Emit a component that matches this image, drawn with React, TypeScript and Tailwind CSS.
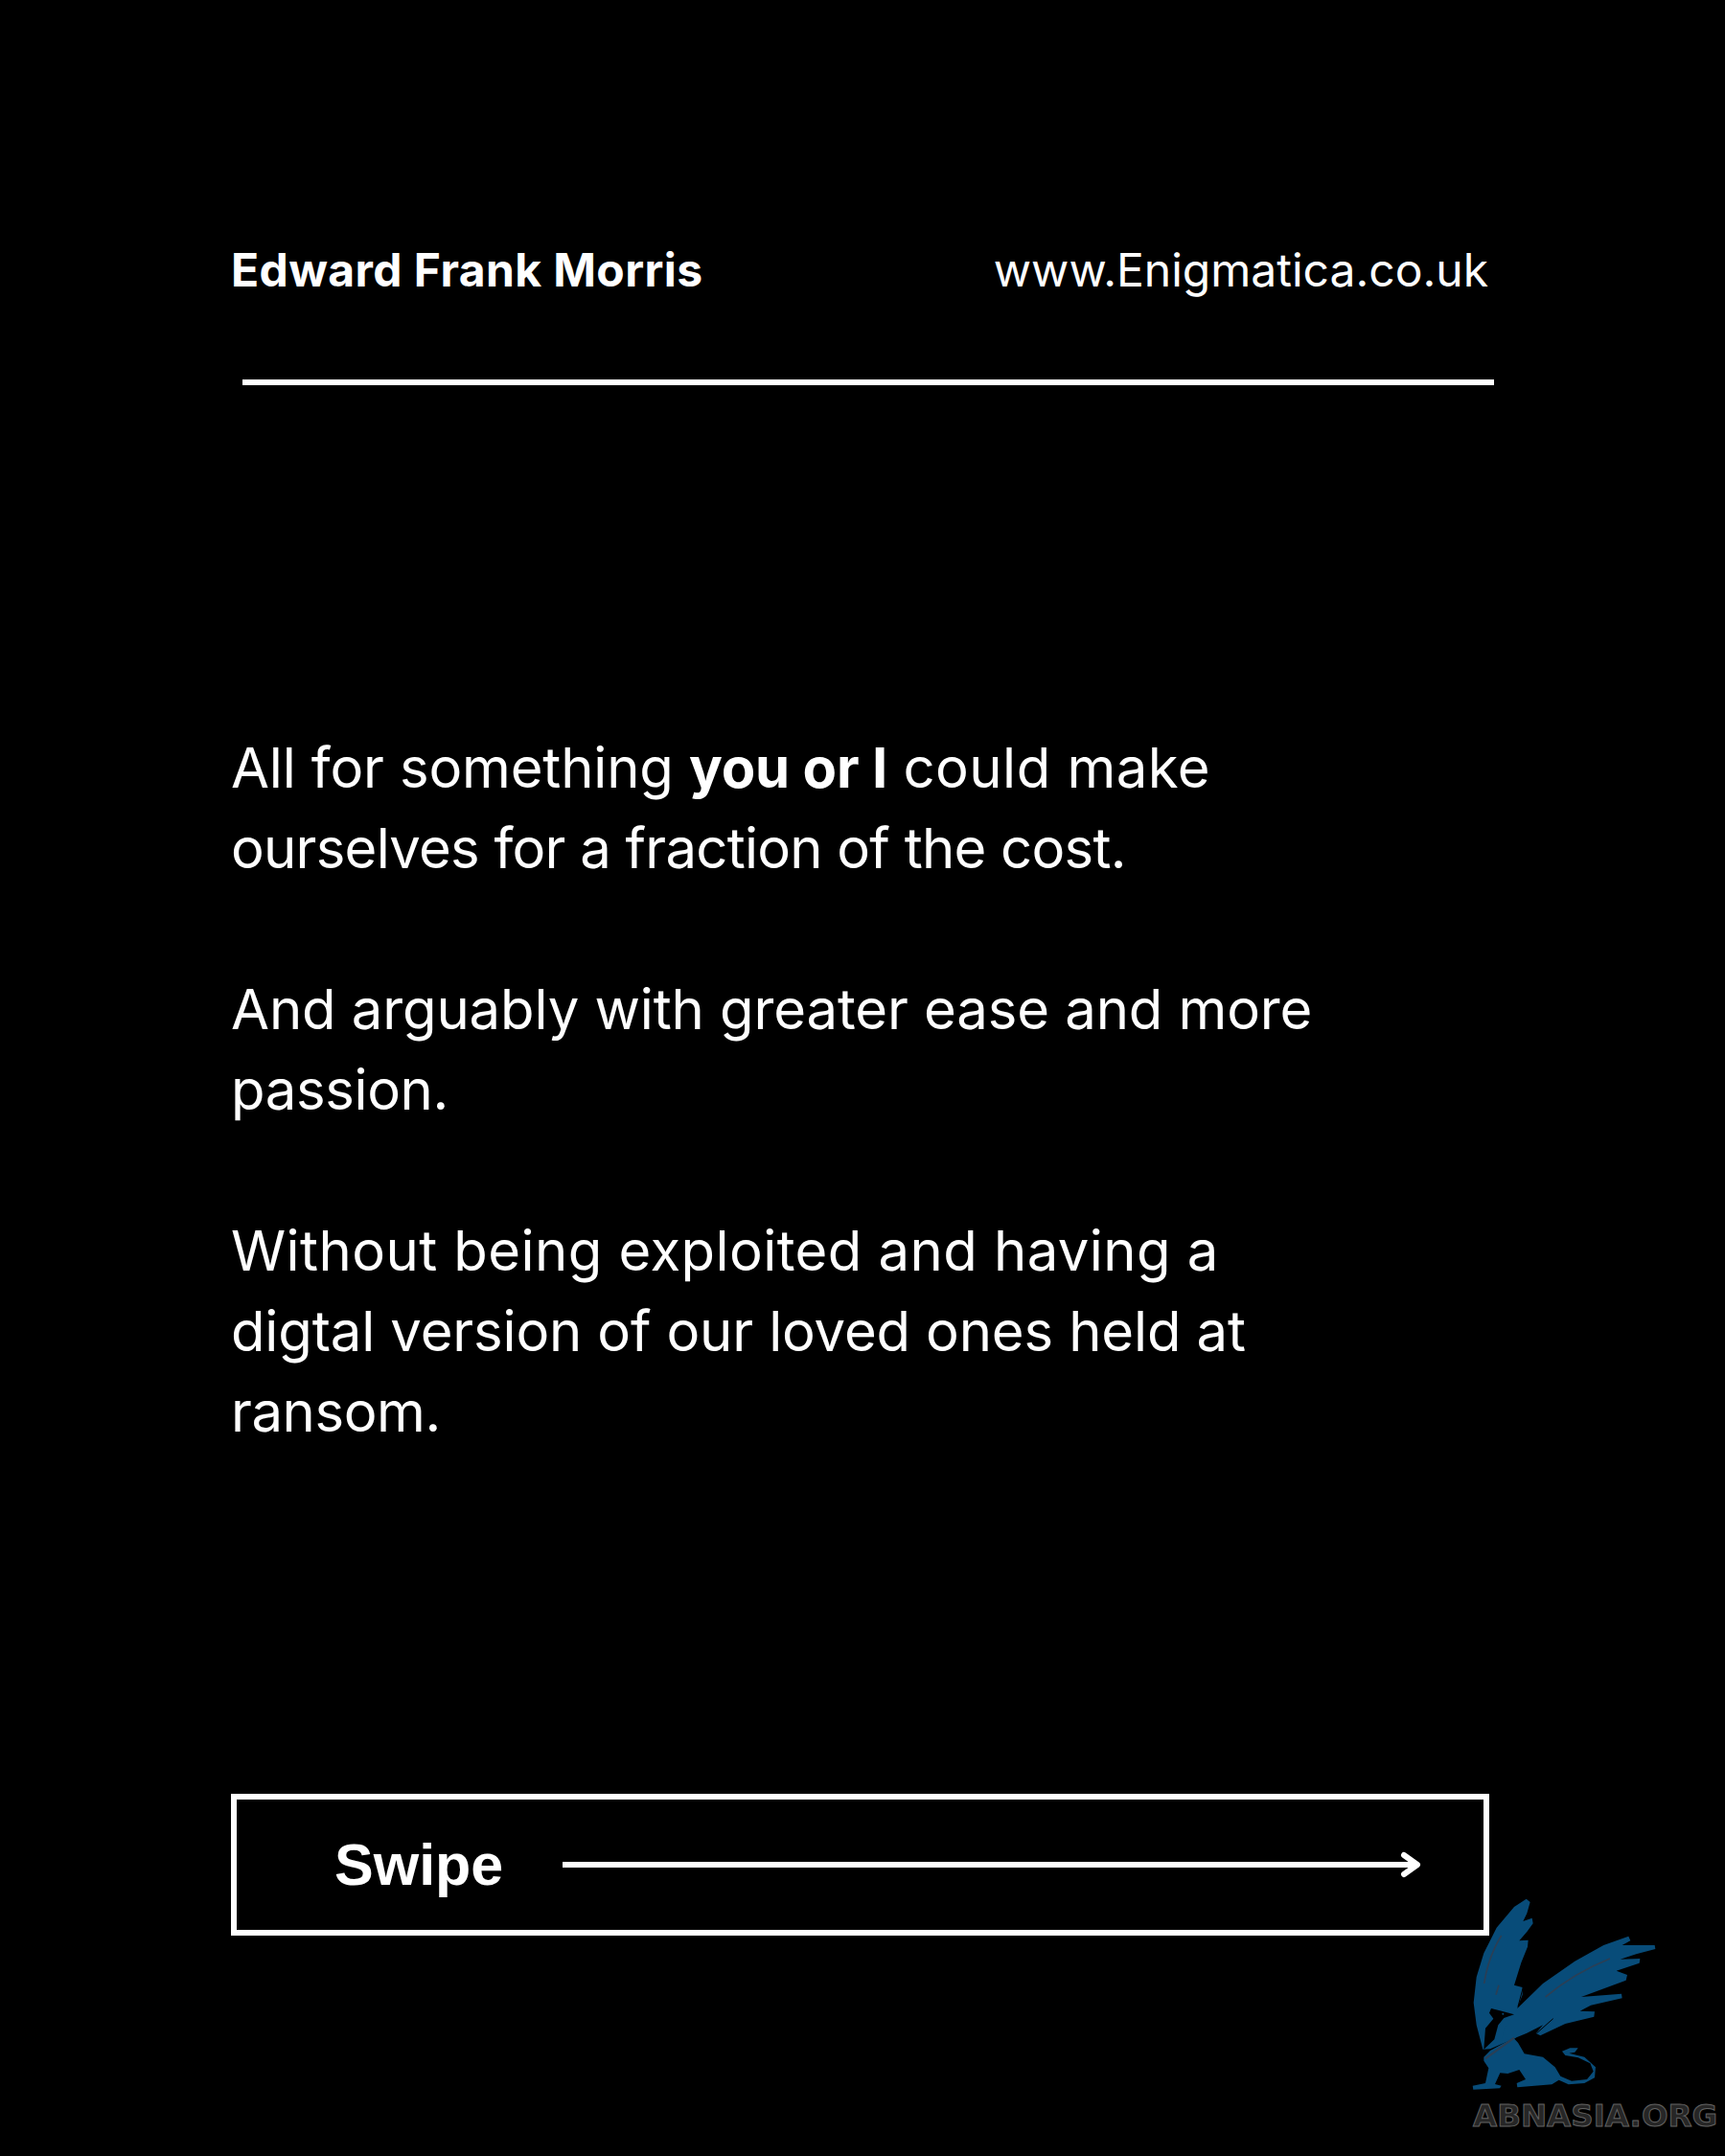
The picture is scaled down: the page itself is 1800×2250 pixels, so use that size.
const griffinWing =
  "M142 566 L122 490 L113 420 L122 340 L145 265 L185 185 L240 120 L278 95 L290 105 L280 140 L268 165 L296 155 L299 172 L280 198 L256 226 L284 224 L282 245 L262 295 L240 365 L266 372 L266 395 L250 436 L262 450 L245 530 L165 565 Z";
const griffinRightWing =
  "M252 436 L330 360 L430 290 L520 240 L598 212 L604 226 L578 240 L680 240 L682 252 L622 268 L572 284 L634 282 L632 296 L560 320 L594 333 L590 350 L450 402 L576 392 L578 406 L480 428 L446 446 L492 448 L490 464 L400 486 L322 523 L308 516 L330 490 L280 515 L240 532 L200 540 L210 500 Z";
const griffinBody =
  "M145 590 L165 570 L238 530 L252 545 L272 580 L330 590 L368 622 L385 650 L420 665 L468 660 L488 635 L478 610 L440 592 L400 585 L390 572 L415 562 L440 562 L430 575 L412 578 L460 590 L495 622 L492 655 L460 672 L410 676 L380 662 L358 676 L250 685 L248 672 L276 660 L256 630 L220 642 L196 640 L180 675 L200 680 L195 688 L112 692 L110 680 L150 672 L160 625 L145 602 Z";
const griffinHead =
  "M168 438 L195 445 L240 457 L208 468 L190 490 L178 535 L145 566 L150 500 L175 470 L162 452 Z";

function Griffin() {
  return (
    <svg viewBox="0 0 900 900" className="absolute top-[1950px] left-[1500px] h-[300px] w-[300px]">
      <path d={griffinWing} fill="#084c79" />
      <path d={griffinRightWing} fill="#084c79" />
      <path d={griffinBody} fill="#084c79" />
      <path d={griffinHead} fill="#000" />
      <circle cx="205" cy="455" r="3" fill="#084c79" />
      <path d="M268 372 L252 432" stroke="#000" strokeWidth="3" fill="none" />
      <path d="M200 210 C175 250 155 300 146 360" stroke="#2b3f55" strokeWidth="5" fill="none" />
      <path d="M192 365 L183 395" stroke="#2b3f55" strokeWidth="5" fill="none" />
      <path d="M540 282 C470 310 400 350 338 402" stroke="#2b3f55" strokeWidth="5" fill="none" />
      <path d="M150 595 L240 530" stroke="#2b3f55" strokeWidth="6" fill="none" />
      <path d="M310 516 L362 470" stroke="#000" strokeWidth="3" fill="none" />
    </svg>
  );
}

export default function App() {
  return (
    <main className="relative h-[2250px] w-[1800px] overflow-hidden bg-black font-['Inter',sans-serif] text-white">
      <div className="flex flex-col pt-[252px] pr-[241px] pl-[241px]">
        <header className="mr-[6px] flex items-center justify-between">
          <span className="text-[48px] leading-[60px] font-bold tracking-[0.4px]">Edward Frank Morris</span>
          <span className="text-[48px] leading-[60px] tracking-[0px]">www.Enigmatica.co.uk</span>
        </header>
        <div className="mt-[84px] ml-[12px] h-[6px] bg-white" />

        <section className="mt-[357px] flex flex-col gap-[84px] text-[58px] leading-[84px]">
          <p>
            <span className="block tracking-[-0.15px]">
              All for something <b className="font-bold">you or I</b>{" "}
              <span className="tracking-[0.5px]">could make</span>
            </span>
            <span className="block tracking-[-0.74px]">ourselves for a fraction of the cost.</span>
          </p>
          <p>
            <span className="block tracking-[-0.1px]">And arguably with greater ease and more</span>
            <span className="block tracking-[-0.35px]">passion.</span>
          </p>
          <p>
            <span className="block tracking-[0.44px]">Without being exploited and having a</span>
            <span className="block tracking-[-0.14px]">digtal version of our loved ones held at</span>
            <span className="block tracking-[-0.4px]">ransom.</span>
          </p>
        </section>

        <div className="mt-[357px] mr-[5px] flex h-[148px] items-center border-[6px] border-white pl-[102px]">
          <span className="font-['Liberation_Sans',sans-serif] text-[61px] leading-[70px] font-bold">Swipe</span>
          <svg viewBox="0 0 900 30" className="ml-[62px] h-[30px] w-[900px]" fill="none" stroke="#fff" strokeWidth="6" strokeLinecap="round" strokeLinejoin="round">
            <path d="M0 15 H888" strokeLinecap="butt" />
            <path d="M878 5 L892 15 L878 25" />
          </svg>
        </div>
      </div>

      <Griffin />
      <span className="absolute top-[2189px] left-[1537px] font-['DejaVu_Sans',sans-serif] text-[32.5px] leading-[38px] font-bold text-[#262626] [-webkit-text-stroke:1px_#616161]">
        ABNASIA.ORG
      </span>
    </main>
  );
}
